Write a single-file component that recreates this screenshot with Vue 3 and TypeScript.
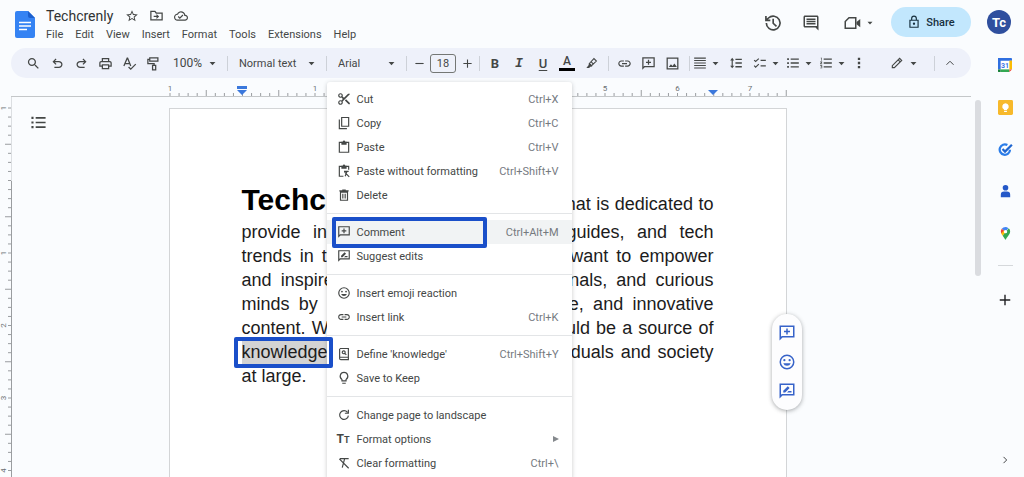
<script setup lang="ts">
import { h, ref } from 'vue'

interface Glyph { f?: string; s?: string }

const glyphs: Record<string, Glyph> = {
  star: { f: 'M22 9.24l-7.19-.62L12 2 9.19 8.63 2 9.24l5.46 4.73L5.82 21 12 17.27 18.18 21l-1.63-7.03L22 9.24zM12 15.4l-3.76 2.27 1-4.28-3.32-2.88 4.38-.38L12 6.1l1.71 4.04 4.38.38-3.32 2.88 1 4.28L12 15.4z' },
  move: { s: 'M3 5.5h6.5l2 2.5H21V19H3z', f: 'M12 9.5l4.2 4-4.2 4v-3H7.5v-2H12z' },
  cloud: { f: 'M19.35 10.04C18.67 6.59 15.64 4 12 4 9.11 4 6.61 5.64 5.36 8.04 2.35 8.36 0 10.9 0 14c0 3.31 2.69 6 6 6h13c2.76 0 5-2.24 5-5 0-2.64-2.05-4.78-4.65-4.96zM19 18H6c-2.21 0-4-1.79-4-4 0-2.05 1.53-3.76 3.56-3.97l1.07-.11.5-.95C8.08 7.14 9.94 6 12 6c2.62 0 4.88 1.86 5.39 4.43l.3 1.5 1.53.11c1.56.1 2.78 1.41 2.78 2.96 0 1.65-1.35 3-3 3zm-9-3.82l-2.09-2.09L6.5 13.5 10 17l6.01-6.01-1.41-1.41z' },
  history: { s: 'M4 12a8.2 8.2 0 1 0 2.6-6L3.5 8.8M3.5 3.5v5.3h5.3M12.2 7v5.3l4 3.7' },
  notes: { f: 'M22 4c0-1.1-.9-2-2-2H4c-1.1 0-2 .9-2 2v12c0 1.1.9 2 2 2h14l4 4V4zM20 16H4V4h16zM6 12h12v2H6zM6 9h12v2H6zM6 6h12v2H6z' },
  camera: { s: 'M8 5h9v14H3V10z', f: 'M18 10.5l5-4v11l-5-4z' },
  lock: { s: 'M5 9h14v12H5zM8 9V6a4 4 0 0 1 8 0v3', f: 'M12 13a2 2 0 1 1 0 4 2 2 0 0 1 0-4z' },
  search: { f: 'M15.5 14h-.79l-.28-.27C15.41 12.59 16 11.11 16 9.5 16 5.91 13.09 3 9.5 3S3 5.91 3 9.5 5.91 16 9.5 16c1.61 0 3.09-.59 4.23-1.57l.27.28v.79l5 4.99L20.49 19l-4.99-5zm-6 0C7.01 14 5 11.99 5 9.5S7.01 5 9.5 5 14 7.01 14 9.5 11.99 14 9.5 14z' },
  undo: { f: 'M7 19v-2h7.1q1.575 0 2.738-1T18 13.5t-1.162-2.5T14.1 10H7.8l2.6 2.6L9 14 4 9l5-5 1.4 1.4L7.8 8h6.3q2.425 0 4.163 1.575T20 13.5t-1.737 3.925T14.1 19z' },
  redo: { f: 'M9.9 19q-2.425 0-4.162-1.575T4 13.5t1.738-3.925T9.9 8h6.3l-2.6-2.6L15 4l5 5-5 5-1.4-1.4 2.6-2.6H9.9q-1.575 0-2.737 1T6 13.5 7.163 16 9.9 17H17v2z' },
  print: { f: 'M19 8h-1V3H6v5H5c-1.66 0-3 1.34-3 3v6h4v4h12v-4h4v-6c0-1.66-1.34-3-3-3zM8 5h8v3H8V5zm8 12v2H8v-4h8v2zm2-2v-2H6v2H4v-4c0-.55.45-1 1-1h14c.55 0 1 .45 1 1v4h-2z' },
  spell: { s: 'M3 16L8.3 3.5h.7L14 16M5 12h7.3M10.5 17.5l3.5 3.5 8-8' },
  paint: { s: 'M6 3h13v5H6zM6 5.5H3V12h10v3M10.5 15h5v7h-5z' },
  caret: { f: 'M2 7h20L12 18z' },
  pen: { s: 'M8 12l8.5-9 4.5 4.5L12 16zM11.5 9l4 4', f: 'M7.500 11l6 6-3.500 1-2.500 2.500H2.500L6.500 15z' },
  link: { f: 'M3.9 12c0-1.71 1.39-3.1 3.1-3.1h4V7H7c-2.76 0-5 2.24-5 5s2.24 5 5 5h4v-1.9H7c-1.71 0-3.1-1.39-3.1-3.1zM8 13h8v-2H8zM17 7h-4v1.9h4c1.71 0 3.1 1.39 3.1 3.1s-1.39 3.1-3.1 3.1h-4V17h4c2.76 0 5-2.24 5-5s-2.24-5-5-5z' },
  comment: { f: 'M2 2h20v16H6l-4 4zM4 4v13l1-1h15V4zM11 6h2v3h3v2h-3v3h-2v-3H8V9h3z' },
  suggest: { f: 'M2 2h20v16H6l-4 4zM4 4v13l1-1h15V4zM7 14v-2.5l6-6 2.5 2.5-6 6zM12 14l2-2h4v2z' },
  image: { s: 'M3.5 3.5h17v17h-17z', f: 'M6 17.5l3.5-4.5 2.5 3 3-4 4 5.5z' },
  align: { f: 'M2 2.5h20v2H2zM2 6.75h20v2H2zM2 11h20v2H2zM2 15.25h20v2H2zM2 19.5h20v2H2z' },
  spacing: { f: 'M5.5 3L9 7.5H6.5v9H9L5.5 21 2 16.5h2.5v-9H2zM11 4.5h11v2.2H11zM11 10.9h11v2.2H11zM11 17.3h11v2.2H11z' },
  checks: { s: 'M2 7l2.5 2.5L10 4.500M2 16.5L4.5 19 10 14M13 7.5h9M13 17h9' },
  bullets: { f: 'M2 4h3v3H2zM2 10.5h3v3H2zM2 17h3v3H2zM8 4.4h14v2.2H8zM8 10.9h14v2.2H8zM8 17.4h14v2.2H8z' },
  numbers: { f: 'M3 3h2v5H4V4H3zM2 9.5h3.5v1.2L3.7 13h1.8v1H2v-1.2L3.8 10.5H2zM2 16h3.5v5H2v-1h2.4v-1H3v-1h1.4v-1H2zM8 4.4h14v2.2H8zM8 10.9h14v2.2H8zM8 17.4h14v2.2H8z' },
  dots: { f: 'M10 3h4v4h-4zM10 10h4v4h-4zM10 17h4v4h-4z' },
  pencil: { s: 'M4 20v-3.5L16.5 4 20 7.5 7.5 20zM14 6.5l3.5 3.5' },
  up: { s: 'M5 15.5l7-7 7 7' },
  right: { s: 'M8.5 4.5l7.5 7.5-7.5 7.5' },
  plus: { f: 'M10.800 3h2.400v7.800H21v2.400h-7.800V21h-2.400v-7.800H3v-2.400h7.800z' },
  minus: { f: 'M3 10.800h18v2.400H3z' },
  cut: { f: 'M6 2a4 4 0 0 1 3.64 5.64L12 10l7-7h3v1L9.64 16.36A4 4 0 1 1 7.64 14.36L10 12 7.64 9.64A4 4 0 1 1 6 2zM6 4a2 2 0 1 0 0 4 2 2 0 0 0 0-4zM6 16a2 2 0 1 0 0 4 2 2 0 0 0 0-4zM13.5 14.5l2-2L22 19v2h-2z' },
  copy: { s: 'M8 2.5h12v15H8zM4 6v15.5h13' },
  paste: { s: 'M4 4h16v17H4z', f: 'M7.5 3H10a2 2 0 0 1 4 0h2.5v5h-9z' },
  pasteplain: { s: 'M11 21H4V4h16v6M12 12.5h8M17 13l-3 8M13 14l8 8', f: 'M7.5 3H10a2 2 0 0 1 4 0h2.5v5h-9z' },
  trash: { s: 'M6 7h12v14H6zM10 10v8M14 10v8M4 5h16M9 3.5h6' },
  emoji: { f: 'M12 2a10 10 0 1 0 0 20 10 10 0 0 0 0-20zM12 4a8 8 0 1 1 0 16 8 8 0 0 1 0-16zM8.5 8a1.5 1.5 0 1 1 0 3 1.5 1.5 0 0 1 0-3zM15.5 8a1.5 1.5 0 1 1 0 3 1.5 1.5 0 0 1 0-3zM7 13.5h10a5.3 5.3 0 0 1-10 0z' },
  define: { s: 'M5 2.5h14.5v19H6.5a2 2 0 0 1-2-2V3M5 17.5h14M11.5 6.5a2.5 2.5 0 1 0 .01 0M13.5 11l2.5 2.5' },
  bulb: { s: 'M12 2.5a6.5 6.5 0 0 0-3.5 12V17h7v-2.5a6.5 6.5 0 0 0-3.5-12zM9 21h6' },
  rotate: { s: 'M18 7.5A7.5 7.5 0 1 0 19.5 13M19.5 3v6h-6' },
  clear: { s: 'M5 4.5h15M13 5l-4 15M4 5l16 16' },
}

const Icon = (props: { n: string; size?: number }) => {
  const g = glyphs[props.n]
  const size = props.size ?? 16
  return h('svg', { viewBox: '0 0 24 24', width: size, height: size, 'aria-hidden': 'true', class: 'icon' }, [
    g.s ? h('path', { d: g.s, fill: 'none', stroke: 'currentColor', 'stroke-width': 2 }) : null,
    g.f ? h('path', { d: g.f, fill: 'currentColor', 'fill-rule': 'evenodd' }) : null,
  ])
}
Icon.props = ['n', 'size']

const menus = ['File', 'Edit', 'View', 'Insert', 'Format', 'Tools', 'Extensions', 'Help']
const fontSize = ref('18')

const editTools = [
  { n: 'search', label: 'Search the menus' },
  { n: 'undo', label: 'Undo' },
  { n: 'redo', label: 'Redo' },
  { n: 'print', label: 'Print' },
  { n: 'spell', label: 'Spelling' },
  { n: 'paint', label: 'Paint format' },
]
const insertTools = [
  { n: 'link', label: 'Insert link' },
  { n: 'comment', label: 'Add comment' },
  { n: 'image', label: 'Insert image' },
]
const listTools = [
  { n: 'align', label: 'Align', caret: true },
  { n: 'spacing', label: 'Line spacing', caret: false },
  { n: 'checks', label: 'Checklist', caret: true },
  { n: 'bullets', label: 'Bulleted list', caret: true },
  { n: 'numbers', label: 'Numbered list', caret: true },
]

interface Entry { n: string; label: string; keys?: string; active?: boolean; sub?: boolean }
const groups: Entry[][] = [
  [
    { n: 'cut', label: 'Cut', keys: 'Ctrl+X' },
    { n: 'copy', label: 'Copy', keys: 'Ctrl+C' },
    { n: 'paste', label: 'Paste', keys: 'Ctrl+V' },
    { n: 'pasteplain', label: 'Paste without formatting', keys: 'Ctrl+Shift+V' },
    { n: 'trash', label: 'Delete' },
  ],
  [
    { n: 'comment', label: 'Comment', keys: 'Ctrl+Alt+M', active: true },
    { n: 'suggest', label: 'Suggest edits' },
  ],
  [
    { n: 'emoji', label: 'Insert emoji reaction' },
    { n: 'link', label: 'Insert link', keys: 'Ctrl+K' },
  ],
  [
    { n: 'define', label: "Define 'knowledge'", keys: 'Ctrl+Shift+Y' },
    { n: 'bulb', label: 'Save to Keep' },
  ],
  [
    { n: 'rotate', label: 'Change page to landscape' },
    { n: 'size', label: 'Format options', sub: true },
    { n: 'clear', label: 'Clear formatting', keys: 'Ctrl+\\' },
  ],
]

const lines = [
  'provide informative articles, reviews, guides, and tech',
  'trends in the modern digital world. We want to empower',
  'and inspire students, working professionals, and curious',
  'minds by providing informative, valuable, and innovative',
  'content. We believe that technology should be a source of',
]

/* Ruler marks: eight per inch, counted from the page margin. */
const inch = 72.5
const ruler = (count: number, start: number) =>
  Array.from({ length: count }, (_, i) => {
    const step = i - 8
    return {
      at: start + (i * inch) / 8,
      len: step % 8 === 0 ? 3 : step % 4 === 0 ? 6 : 3,
      label: step % 8 === 0 && step !== 0 ? String(Math.abs(step / 8)) : '',
    }
  })
const across = ruler(69, 1)
const down = ruler(44, 11)
</script>

<template>
  <div class="app">
    <header class="top">
      <svg class="logo" viewBox="0 0 20 27" width="20" height="27" aria-hidden="true">
        <path d="M2 0h11l7 7v18a2 2 0 0 1-2 2H2a2 2 0 0 1-2-2V2a2 2 0 0 1 2-2z" fill="#3583f3" />
        <path d="M13 0l7 7h-5a2 2 0 0 1-2-2z" fill="#1b5fce" />
        <path d="M4 11.500h12M4 15h12M4 18.500h8" stroke="#fff" stroke-width="1.500" />
      </svg>
      <div class="naming">
        <div class="name-row">
          <h1>Techcrenly</h1>
          <button aria-label="Star"><Icon n="star" :size="14" /></button>
          <button aria-label="Move"><Icon n="move" :size="15" /></button>
          <button aria-label="Document status"><Icon n="cloud" :size="14" /></button>
        </div>
        <nav class="menus">
          <button v-for="m in menus" :key="m">{{ m }}</button>
        </nav>
      </div>
      <div class="actions">
        <button aria-label="Version history"><Icon n="history" :size="20" /></button>
        <button aria-label="Open comments"><Icon n="notes" :size="18" /></button>
        <button class="call" aria-label="Join a call"><Icon n="camera" :size="18" /><Icon n="caret" :size="6" /></button>
      </div>
      <button class="share"><Icon n="lock" :size="14" />Share</button>
      <button class="avatar" aria-label="Account">Tc</button>
    </header>

    <div class="body">
      <main class="main">
        <div class="toolbar" role="toolbar" aria-label="Formatting">
          <button v-for="t in editTools" :key="t.n" class="tool" :aria-label="t.label"><Icon :n="t.n" :size="15" /></button>
          <label class="pick zoom">
            <select aria-label="Zoom"><option>100%</option></select><Icon n="caret" :size="7" />
          </label>
          <i class="rule"></i>
          <label class="pick styles">
            <select aria-label="Styles"><option>Normal text</option></select><Icon n="caret" :size="7" />
          </label>
          <i class="rule"></i>
          <label class="pick fonts">
            <select aria-label="Font"><option>Arial</option></select><Icon n="caret" :size="7" />
          </label>
          <i class="rule"></i>
          <div class="sizer">
            <button aria-label="Decrease font size"><Icon n="minus" :size="11" /></button>
            <input v-model="fontSize" aria-label="Font size" />
            <button aria-label="Increase font size"><Icon n="plus" :size="11" /></button>
          </div>
          <i class="rule"></i>
          <div class="cluster">
            <button class="tool letter bold" aria-label="Bold">B</button>
            <button class="tool letter italic" aria-label="Italic">I</button>
            <button class="tool letter under" aria-label="Underline">U</button>
            <button class="tool letter ink" aria-label="Text color"><span>A</span></button>
            <button class="tool" aria-label="Highlight color"><Icon n="pen" :size="13" /></button>
          </div>
          <i class="rule"></i>
          <div class="cluster">
            <button v-for="t in insertTools" :key="t.n" class="tool" :aria-label="t.label"><Icon :n="t.n" :size="15" /></button>
          </div>
          <i class="rule"></i>
          <div class="lists">
            <button v-for="t in listTools" :key="t.n" :class="{ wide: !t.caret }" :aria-label="t.label">
              <Icon :n="t.n" :size="14" /><Icon v-if="t.caret" n="caret" :size="7" />
            </button>
            <button aria-label="More"><Icon n="dots" :size="14" /></button>
          </div>
          <button class="mode" aria-label="Editing mode"><Icon n="pencil" :size="14" /><Icon n="caret" :size="7" /></button>
          <i class="rule"></i>
          <button class="tool" aria-label="Hide the menus"><Icon n="up" :size="12" /></button>
        </div>

        <div class="ruler-row">
          <svg class="ruler" width="618" height="18" viewBox="0 0 618 18" aria-hidden="true">
            <line v-for="m in across" :key="m.at" :x1="m.at" :x2="m.at" :y1="18 - m.len" y2="18" />
            <template v-for="m in across" :key="m.at">
              <text v-if="m.label" :x="m.at" y="13">{{ m.label }}</text>
            </template>
            <path d="M68 8h10v3h-10zM68 12h10l-5 5z" class="marker" />
            <path d="M539 12h10l-5 5z" class="marker" />
          </svg>
        </div>

        <div class="canvas">
          <svg class="vruler" width="12" height="400" viewBox="0 0 12 400" aria-hidden="true">
            <line v-for="m in down" :key="m.at" :x1="11 - m.len" x2="11" :y1="m.at" :y2="m.at" />
            <template v-for="m in down" :key="m.at">
              <text v-if="m.label" :transform="`translate(6 ${m.at}) rotate(-90)`">{{ m.label }}</text>
            </template>
            <path d="M11.500 0v84" class="edge pale" />
            <path d="M11.500 84v316" class="edge" />
          </svg>
          <button class="outline" aria-label="Show outline"><Icon n="bullets" :size="17" /></button>

          <article class="page">
            <p class="text">
              <span class="line"><strong>Techcrenly</strong> is a digital platform that is dedicated to</span>
              <span v-for="l in lines" :key="l" class="line">{{ l }}</span>
              <span class="line"><mark>knowledge</mark> and innovation for both individuals and society</span>
              <span class="line last">at large.</span>
            </p>

            <div class="context" role="menu" aria-label="Edit">
              <div v-for="(g, i) in groups" :key="i" class="group">
                <button v-for="e in g" :key="e.label" role="menuitem" :class="{ active: e.active }">
                  <span v-if="e.n === 'size'" class="tt">T<small>T</small></span>
                  <Icon v-else :n="e.n" :size="14" />
                  <span class="what">{{ e.label }}</span>
                  <kbd v-if="e.keys">{{ e.keys }}</kbd>
                  <svg v-if="e.sub" class="sub" viewBox="0 0 6 6" width="6" height="6"><path d="M0 0l6 3-6 3z" /></svg>
                </button>
              </div>
            </div>

            <div class="pill">
              <button aria-label="Add comment"><Icon n="comment" :size="18" /></button>
              <button aria-label="Add emoji reaction"><Icon n="emoji" :size="18" /></button>
              <button aria-label="Suggest edits"><Icon n="suggest" :size="18" /></button>
            </div>
          </article>
          <div class="scroll"><i></i></div>
        </div>
      </main>

      <aside class="rail">
        <button aria-label="Calendar">
          <svg viewBox="0 0 16 16" width="14" height="14">
            <path d="M0 0h16v16H0z" fill="#fff" />
            <path d="M1 0h14a1 1 0 0 1 1 1v2H0V1a1 1 0 0 1 1-1zM0 0h3v13H0z" fill="#2f6fe0" />
            <path d="M13 3h3v10h-3z" fill="#fbbc04" />
            <path d="M3 13h10v3H3z" fill="#34a853" />
            <path d="M0 13h3v3H1a1 1 0 0 1-1-1z" fill="#188038" />
            <path d="M13 13h3l-3 3z" fill="#ea4335" />
            <text x="8" y="11" text-anchor="middle" font-size="8" font-weight="700" fill="#3b78e7">31</text>
          </svg>
        </button>
        <button aria-label="Keep">
          <svg viewBox="0 0 16 16" width="15" height="15">
            <rect width="16" height="16" rx="1.500" fill="#f7b92b" />
            <path d="M8 3.500a3.500 3.500 0 0 0-1.600 6.600V11h3.200v-.9A3.500 3.500 0 0 0 8 3.500zM6.500 11.800h3v1h-3z" fill="#fff" />
          </svg>
        </button>
        <button aria-label="Tasks">
          <svg viewBox="0 0 16 16" width="15" height="15" fill="none">
            <path d="M12.800 8.200A5.500 5.500 0 1 1 10 3.300" stroke="#2b7de9" stroke-width="2.400" />
            <path d="M4.800 7.500l2.700 2.700 7.300-7.200" stroke="#1f66d0" stroke-width="2.400" />
          </svg>
        </button>
        <button aria-label="Contacts">
          <svg viewBox="0 0 16 16" width="15" height="15" fill="#2458c8">
            <circle cx="8" cy="4" r="3" /><path d="M3 14v-2.500A3.500 3.500 0 0 1 6.500 8h3a3.500 3.500 0 0 1 3.500 3.500V14z" />
          </svg>
        </button>
        <button aria-label="Maps">
          <svg viewBox="0 0 16 16" width="15" height="15">
            <path d="M8 1a5 5 0 0 0-4 2l4 3 3-3.700A5 5 0 0 0 8 1z" fill="#4285f4" />
            <path d="M4 3a5 5 0 0 0-.6 5L8 6z" fill="#ea4335" />
            <path d="M3.400 8l1.600 2.500L9 6 6 5z" fill="#fbbc04" />
            <path d="M11.500 2.500C14 5 13 8 11 10.500 9.500 12.500 9 13 8.500 14.500h-1C7 13 6 12 5 10.500z" fill="#34a853" />
            <circle cx="8" cy="6" r="1.800" fill="#fff" />
          </svg>
        </button>
        <hr />
        <button class="add" aria-label="Get add-ons"><Icon n="plus" :size="14" /></button>
        <button class="hide" aria-label="Hide side panel"><Icon n="right" :size="10" /></button>
      </aside>
    </div>
  </div>
</template>

<style>
html, body { margin: 0; background: #fafcfe; overflow: hidden; }
</style>

<style scoped>
.app { height: 100vh; display: flex; flex-direction: column; overflow: hidden; color: #444746; background: #fafcfe; font-family: Roboto, "Liberation Sans", sans-serif; font-size: 11px; }
button { border: 0; padding: 0; margin: 0; background: none; color: inherit; font: inherit; display: flex; align-items: center; justify-content: center; cursor: pointer; }
.icon { display: block; flex: none; }

.top { height: 48px; flex: none; display: flex; align-items: center; box-sizing: border-box; padding: 0 13px 0 15px; }
.logo { flex: none; }
.naming { margin-left: 11px; flex: 1; }
.name-row { display: flex; align-items: center; gap: 10px; height: 20px; }
h1 { margin: 0 2px 0 0; font-size: 14px; font-weight: 400; color: #303234; }
.menus { display: flex; gap: 12px; height: 17px; }
.actions { display: flex; align-items: center; gap: 19px; margin-right: 18px; padding-bottom: 3px; }
.call { gap: 6px; margin-left: 4px; }
.share { width: 80px; height: 30px; margin-bottom: 4px; border-radius: 15px; background: #c2e7fd; color: #17303f; font-weight: 500; gap: 5px; }
.avatar { width: 24px; height: 24px; margin: 0 0 4px 16px; border-radius: 50%; background: #2f4f9e; color: #fff; font-weight: 700; font-size: 13px; }

.body { flex: 1; min-height: 0; display: flex; }
.main { flex: 1; min-width: 0; display: flex; flex-direction: column; }
.toolbar { height: 30px; flex: none; display: flex; align-items: center; margin: 0 15px 0 11px; padding: 0 9px 0 10px; box-sizing: border-box; border-radius: 15px; background: #eef1fa; }
.tool { width: 24px; height: 24px; flex: none; }
.rule { width: 1px; height: 15px; margin: 0 3px; flex: none; background: #cdd1d8; }
.pick { position: relative; flex: none; display: flex; align-items: center; }
.pick select { appearance: none; width: 100%; border: 0; padding: 0 0 0 8px; background: none; font: inherit; color: inherit; }
.pick .icon { position: absolute; right: 8px; pointer-events: none; }
.zoom { width: 59px; font-size: 12px; }
.styles { width: 92px; }
.fonts { width: 73px; }
.sizer { display: flex; align-items: center; gap: 2px; }
.sizer button { width: 18px; height: 18px; }
.sizer input { width: 26px; height: 19px; box-sizing: border-box; border: 1px solid #747775; border-radius: 3px; padding: 0; background: none; text-align: center; font: inherit; color: inherit; }
.cluster { display: flex; padding-right: 2px; }
.letter { font-size: 13px; font-weight: 500; }
.bold { font-weight: 700; }
.italic { font-style: italic; font-family: "Liberation Mono", monospace; font-weight: 700; }
.under { text-decoration: underline; text-underline-offset: 2px; }
.ink span { width: 16px; line-height: 13px; border-bottom: 3px solid #000; font-size: 12px; }
.lists { display: flex; align-items: center; gap: 7px; }
.lists button { gap: 5px; height: 24px; }
.lists .wide { width: 20px; }
.mode { gap: 6px; margin: 0 14px 0 auto; }

.ruler-row { height: 19px; flex: none; box-sizing: border-box; margin: 0 15px 0 11px; padding-right: 27px; border-bottom: 1px solid #c4c7c9; display: flex; justify-content: center; }
.ruler, .vruler { flex: none; overflow: visible; }
.ruler line, .vruler line { stroke: #9a9da0; stroke-width: 1; }
.ruler text, .vruler text { font-size: 8px; fill: #6b6f73; text-anchor: middle; }
.marker { fill: #3b78dc; }
.edge { stroke: #9a9da0; }
.pale { stroke: #dcdfe2; }

.canvas { position: relative; flex: 1; min-height: 0; display: flex; padding-right: 42px; }
.vruler { margin-right: -1px; }
.outline { align-self: flex-start; width: 18px; height: 18px; margin: 16px -36px 0 18px; }
.page { position: relative; width: 618px; flex: none; box-sizing: border-box; margin: 11px auto 0; padding: 71px 72px 0; border: 1px solid #d3d5d7; border-bottom: 0; background: #fff; }
.text { margin: 0; font-family: "Liberation Sans", Arial, sans-serif; font-size: 18px; line-height: 24px; color: #1c1c1c; }
.line { display: block; white-space: nowrap; text-align: justify; text-align-last: justify; }
.line strong { font-size: 30px; line-height: 40px; color: #000; }
.last { text-align-last: left; }
mark { position: relative; display: inline-block; background: #d3d3d3; color: inherit; }
mark::after { content: ""; position: absolute; inset: -3px -5px -4px -8px; border: 4px solid #1a4fc9; border-radius: 2px; z-index: 3; }

.context { position: absolute; z-index: 2; left: 157px; top: -27px; width: 245px; box-sizing: border-box; padding: 5px 0; border-radius: 3px; background: #fff; box-shadow: 0 1px 4px rgba(60, 64, 67, .28); }
.group + .group { border-top: 1px solid #e3e5e7; margin-top: 6px; padding-top: 6px; }
.context button { position: relative; width: 100%; height: 24px; padding: 0 13px 0 10px; justify-content: flex-start; text-align: left; }
.what { flex: 1; margin-left: 6px; }
kbd { font: inherit; color: #757a7f; }
.context .active { background: #f1f3f4; }
.active::after { content: ""; position: absolute; left: 5px; top: -3px; bottom: -4px; width: 155px; box-sizing: border-box; border: 4px solid #1a4fc9; border-radius: 2px; }
.tt { width: 14px; font-weight: 700; font-size: 12px; white-space: nowrap; }
.tt small { font-size: 9px; }
.sub { fill: #85898d; }

.pill { position: absolute; right: -16px; top: 205px; width: 30px; height: 96px; box-sizing: border-box; padding: 4px 0; display: flex; flex-direction: column; justify-content: space-around; border-radius: 15px; background: #fdfdfe; color: #3763c9; box-shadow: 0 1px 4px rgba(60, 64, 67, .45); }
.scroll { position: absolute; top: 3px; right: 5px; bottom: 3px; width: 6px; }
.scroll i { display: block; height: 47%; border-radius: 3px; background: #dadce0; }

.rail { width: 38px; flex: none; display: flex; flex-direction: column; align-items: center; box-sizing: border-box; padding: 5px 0; }
.rail button { width: 24px; height: 24px; margin-bottom: 18px; flex: none; }
.rail hr { width: 15px; height: 1px; margin: 2px 0 22px; border: 0; background: #d5d8db; flex: none; }
.rail .add { color: #202124; }
.rail .hide { margin: auto 0 0; color: #202124; }
</style>
